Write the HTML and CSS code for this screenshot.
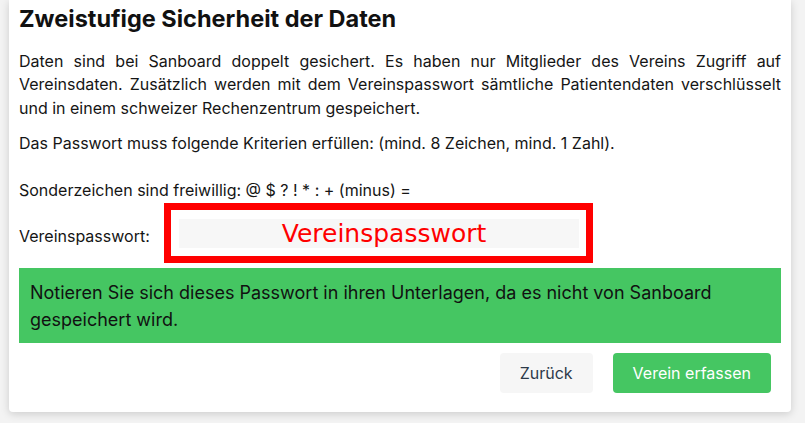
FILE: index.html
```html
<!DOCTYPE html>
<html lang="de">
<head>
<meta charset="utf-8">
<link rel="stylesheet" href="styles.css">
</head>
<body>
<div class="card">
  <h2 class="title">Zweistufige Sicherheit der Daten</h2>
  <p class="text">Daten sind bei Sanboard doppelt gesichert. Es haben nur Mitglieder des Vereins Zugriff auf Vereinsdaten. Zusätzlich werden mit dem Vereinspasswort sämtliche Patientendaten verschlüsselt und in einem schweizer Rechenzentrum gespeichert.</p>
  <p class="text">Das Passwort muss folgende Kriterien erfüllen: (mind. 8 Zeichen, mind. 1 Zahl).<br><br>Sonderzeichen sind freiwillig: @ $ ? ! * : + (minus) =</p>
  <div class="field-row">
    <label class="label" for="pw">Vereinspasswort:</label>
    <div class="highlight">
      <input id="pw" class="input" type="text" placeholder="Vereinspasswort">
    </div>
  </div>
  <div class="alert">Notieren Sie sich dieses Passwort in ihren Unterlagen, da es nicht von Sanboard gespeichert wird.</div>
  <div class="actions">
    <button class="btn btn-light">Zurück</button>
    <button class="btn btn-green">Verein erfassen</button>
  </div>
</div>
</body>
</html>
```
FILE: styles.css
```css
html, body {
  margin: 0;
  padding: 0;
  background: #f3f3f3;
}
body {
  font-family: Inter, "Noto Sans", sans-serif;
  color: #151515;
  height: 423px;
  overflow: hidden;
}
.card {
  margin: 0 14px 0 9px;
  background: #fff;
  padding: 5px 10px 19px 10px;
  box-shadow: 0 2px 8px rgba(0, 0, 0, 0.16);
  border-radius: 0 0 4px 4px;
}
.title {
  margin: 0;
  font-size: 23.5px;
  font-weight: 700;
  line-height: 28px;
  color: #111;
}
.text {
  margin: 16.5px 0 0;
  font-size: 16px;
  line-height: 23.5px;
  text-align: justify;
}
.text + .text {
  margin-top: 12.3px;
}
.field-row {
  display: flex;
  align-items: baseline;
}
.label {
  width: 145px;
  flex: none;
  font-size: 16px;
  line-height: 23.5px;
}
.highlight {
  border: 7px solid #ff0000;
  padding: 9px 7px 8px 8px;
  background: #fff;
}
.input {
  display: block;
  width: 400px;
  height: 29px;
  box-sizing: border-box;
  border: none;
  outline: none;
  background: #f7f7f7;
  padding: 0 0 0 10px;
  font-family: "DejaVu Sans", sans-serif;
  font-size: 25px;
  text-align: center;
}
.input::placeholder {
  color: #ff0000;
  opacity: 1;
}
.alert {
  margin-top: 5px;
  background: #45c662;
  padding: 11px 11px 10px;
  font-size: 18px;
  line-height: 27px;
  color: #111;
}
.actions {
  display: flex;
  justify-content: flex-end;
  gap: 20px;
  margin-top: 10px;
  padding-right: 10px;
}
.btn {
  height: 40px;
  border: none;
  border-radius: 4px;
  padding: 0 20px;
  font-family: Inter, sans-serif;
  font-size: 16px;
}
.btn-light {
  background: #f6f6f6;
  color: #2d3a4a;
}
.btn-green {
  background: #45c662;
  color: #fff;
}
```
